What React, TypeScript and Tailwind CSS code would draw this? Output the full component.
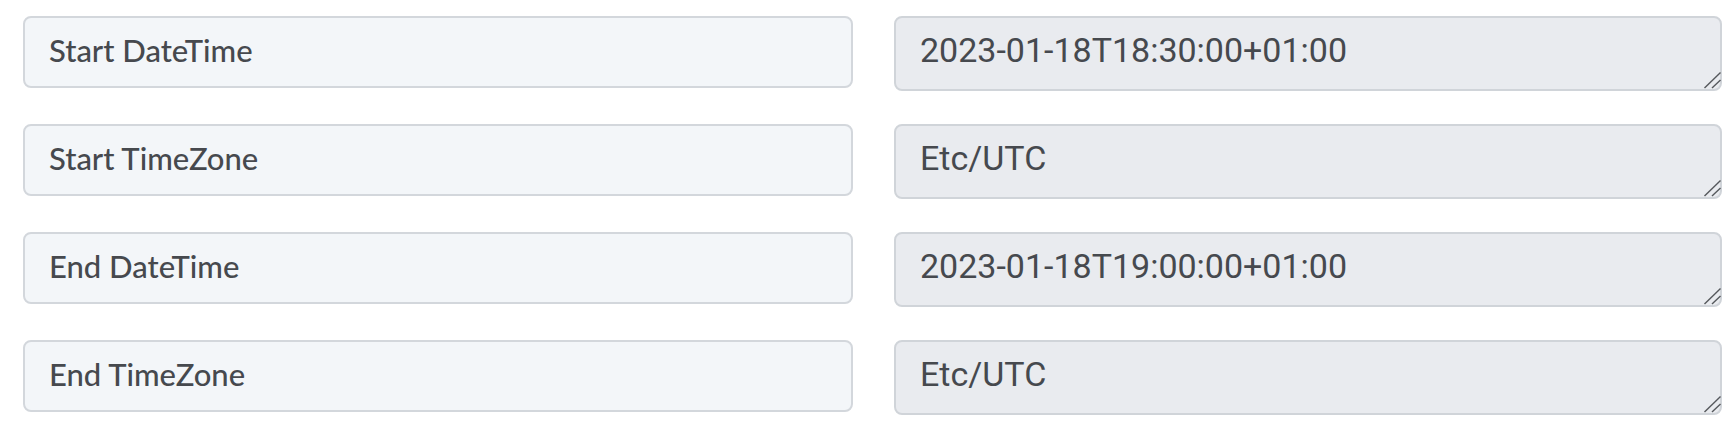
const rows = [
  { label: "Start DateTime", value: "2023-01-18T18:30:00+01:00" },
  { label: "Start TimeZone", value: "Etc/UTC" },
  { label: "End DateTime", value: "2023-01-18T19:00:00+01:00" },
  { label: "End TimeZone", value: "Etc/UTC" },
]

function Grip() {
  return (
    <svg
      className="pointer-events-none absolute bottom-[2px] right-[1px]"
      width="17"
      height="17"
      viewBox="0 0 17 17"
    >
      <line x1="0.5" y1="16" x2="16.5" y2="0.5" stroke="#55585c" strokeWidth="1.4" />
      <line x1="8" y1="16" x2="16.5" y2="8" stroke="#55585c" strokeWidth="1.4" />
    </svg>
  )
}

export default function App() {
  return (
    <div className="min-h-[440px] bg-white pl-[23px] pt-[16px]">
      <div className="flex flex-col gap-[33px]">
        {rows.map((row) => (
          <div key={row.label} className="flex items-start gap-[41px]">
            <div className="flex h-[72px] w-[830px] items-center rounded-[8px] border-2 border-[#d3d7dc] bg-[#f3f6f9] pl-[24px] pb-[3px] font-['Lato',sans-serif] text-[31px] font-medium text-[#46494e]">
              {row.label}
            </div>
            <div className="relative h-[75px] w-[828px]">
              <textarea
                readOnly
                value={row.value}
                className="block h-full w-full resize-none rounded-[8px] border-2 border-[#d0d4d9] bg-[#e9ebef] pl-[24px] pt-[12px] font-['Roboto',sans-serif] text-[34px] leading-[1.2] text-[#46494e] outline-none"
              />
              <Grip />
            </div>
          </div>
        ))}
      </div>
    </div>
  )
}
